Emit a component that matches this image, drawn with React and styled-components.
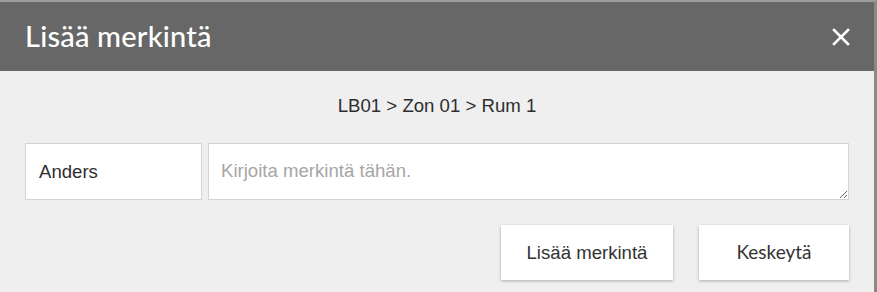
import React from "react";
import styled, { createGlobalStyle } from "styled-components";

const Global = createGlobalStyle`
  html, body {
    margin: 0;
    padding: 0;
    background: #efefef;
  }
  * { box-sizing: border-box; }
`;

const Dialog = styled.div`
  width: 877px;
  height: 292px;
  background: #efefef;
  border-top: 2px solid #9c9c9c;
  border-right: 3px solid #8a8a8a;
  display: flex;
  flex-direction: column;
  overflow: hidden;
`;

const Header = styled.div`
  height: 69px;
  flex-shrink: 0;
  background: #676767;
  display: flex;
  align-items: center;
  justify-content: space-between;
  padding: 0 22px 0 25px;
`;

const Title = styled.h1`
  margin: 0;
  color: #ffffff;
  font-family: Lato, "Open Sans", sans-serif;
  font-weight: 500;
  font-size: 29px;
  letter-spacing: 0.2px;
  position: relative;
  top: -1px;
`;

const CloseButton = styled.button`
  background: none;
  border: 0;
  padding: 0;
  width: 22px;
  height: 22px;
  display: flex;
  align-items: center;
  justify-content: center;
  cursor: pointer;
`;

const Body = styled.div`
  padding: 24px 25px 0 25px;
  display: flex;
  flex-direction: column;
`;

const Crumbs = styled.div`
  text-align: center;
  font-family: "Liberation Sans", Arial, sans-serif;
  font-size: 18.6px;
  color: #2e2e2e;
  height: 22px;
  line-height: 22px;
`;

const Row = styled.div`
  margin-top: 26px;
  display: flex;
  gap: 6px;
  height: 57px;
`;

const NameBox = styled.div`
  width: 177px;
  background: #ffffff;
  border: 1px solid #d4d4d4;
  display: flex;
  align-items: center;
  padding-left: 13px;
  font-family: "Liberation Sans", Arial, sans-serif;
  font-size: 18.6px;
  color: #2e2e2e;
`;

const Note = styled.textarea`
  flex: 1;
  background: #ffffff;
  border: 1px solid #d4d4d4;
  padding: 16px 12px;
  font-family: "Liberation Sans", Arial, sans-serif;
  font-size: 18.6px;
  color: #333333;
  resize: vertical;
  outline: none;
  &::placeholder {
    color: #a6a6a6;
  }
`;

const Actions = styled.div`
  margin-top: 25px;
  display: flex;
  justify-content: flex-end;
  gap: 26px;
`;

const Button = styled.button`
  width: ${(p) => p.$w}px;
  height: 55px;
  background: #ffffff;
  border: 0;
  box-shadow: 0 1px 3px rgba(0, 0, 0, 0.28);
  font-family: ${(p) =>
    p.$alt ? 'Lato, "Open Sans", sans-serif' : '"Liberation Sans", Arial, sans-serif'};
  font-size: ${(p) => (p.$alt ? 19 : 18.6)}px;
  font-weight: 400;
  color: #333333;
  cursor: pointer;
  padding: 0;
  padding-bottom: ${(p) => (p.$alt ? 3 : 0)}px;
`;

export default function App() {
  return (
    <>
      <Global />
      <Dialog>
        <Header>
          <Title>Lisää merkintä</Title>
          <CloseButton aria-label="close">
            <svg width="18" height="18" viewBox="0 0 18 18">
              <path
                d="M2 2 L16 16 M16 2 L2 16"
                stroke="#ffffff"
                strokeWidth="2.6"
                strokeLinecap="square"
              />
            </svg>
          </CloseButton>
        </Header>
        <Body>
          <Crumbs>LB01 &gt; Zon 01 &gt; Rum 1</Crumbs>
          <Row>
            <NameBox>Anders</NameBox>
            <Note placeholder="Kirjoita merkintä tähän." />
          </Row>
          <Actions>
            <Button $w={172}>Lisää merkintä</Button>
            <Button $w={150} $alt>
              Keskeytä
            </Button>
          </Actions>
        </Body>
      </Dialog>
    </>
  );
}
